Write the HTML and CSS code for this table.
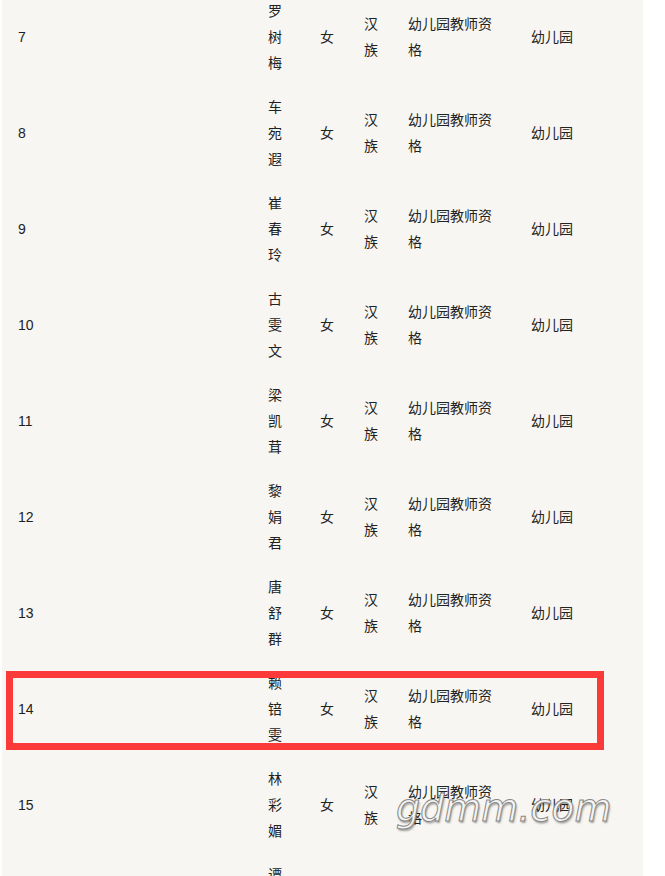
FILE: index.html
```html
<!DOCTYPE html>
<html lang="zh-CN">
<head>
 <meta charset="UTF-8">
 <meta name="viewport" content="width=device-width, initial-scale=1.0">
 <title>幼儿园教师资格名单</title>
 <link rel="stylesheet" href="styles.css">
</head>
<body>
 <div class="panel">
 <div class="list">
 <div class="row">
 <div class="cell num">7</div>
 <div class="cell name">罗树梅</div>
 <div class="cell sex">女</div>
 <div class="cell nation">汉族</div>
 <div class="cell cert">幼儿园教师资格</div>
 <div class="cell level">幼儿园</div>
 </div>
 <div class="row">
 <div class="cell num">8</div>
 <div class="cell name">车宛遐</div>
 <div class="cell sex">女</div>
 <div class="cell nation">汉族</div>
 <div class="cell cert">幼儿园教师资格</div>
 <div class="cell level">幼儿园</div>
 </div>
 <div class="row">
 <div class="cell num">9</div>
 <div class="cell name">崔春玲</div>
 <div class="cell sex">女</div>
 <div class="cell nation">汉族</div>
 <div class="cell cert">幼儿园教师资格</div>
 <div class="cell level">幼儿园</div>
 </div>
 <div class="row">
 <div class="cell num">10</div>
 <div class="cell name">古雯文</div>
 <div class="cell sex">女</div>
 <div class="cell nation">汉族</div>
 <div class="cell cert">幼儿园教师资格</div>
 <div class="cell level">幼儿园</div>
 </div>
 <div class="row">
 <div class="cell num">11</div>
 <div class="cell name">梁凯茸</div>
 <div class="cell sex">女</div>
 <div class="cell nation">汉族</div>
 <div class="cell cert">幼儿园教师资格</div>
 <div class="cell level">幼儿园</div>
 </div>
 <div class="row">
 <div class="cell num">12</div>
 <div class="cell name">黎娟君</div>
 <div class="cell sex">女</div>
 <div class="cell nation">汉族</div>
 <div class="cell cert">幼儿园教师资格</div>
 <div class="cell level">幼儿园</div>
 </div>
 <div class="row">
 <div class="cell num">13</div>
 <div class="cell name">唐舒群</div>
 <div class="cell sex">女</div>
 <div class="cell nation">汉族</div>
 <div class="cell cert">幼儿园教师资格</div>
 <div class="cell level">幼儿园</div>
 </div>
 <div class="row marked">
 <div class="cell num">14</div>
 <div class="cell name">赖锫雯</div>
 <div class="cell sex">女</div>
 <div class="cell nation">汉族</div>
 <div class="cell cert">幼儿园教师资格</div>
 <div class="cell level">幼儿园</div>
 </div>
 <div class="row">
 <div class="cell num">15</div>
 <div class="cell name">林彩媚</div>
 <div class="cell sex">女</div>
 <div class="cell nation">汉族</div>
 <div class="cell cert">幼儿园教师资格</div>
 <div class="cell level">幼儿园</div>
 </div>
 <div class="row">
 <div class="cell num">16</div>
 <div class="cell name">谭丽华</div>
 <div class="cell sex">女</div>
 <div class="cell nation">汉族</div>
 <div class="cell cert">幼儿园教师资格</div>
 <div class="cell level">幼儿园</div>
 </div>
 </div>
 </div>
 <div class="watermark">gdmm.com</div>
</body>
</html>
```

FILE: styles.css
```css
html, body {
    margin: 0;
    padding: 0;
    background-color: #ffffff;
    overflow: hidden;
 }

.panel {
    width: 641px;
    margin-left: 2px;
    min-height: 900px;
    background-color: #f7f6f2;
    font-family: "Liberation Sans", "Noto Sans CJK SC", sans-serif;
    font-size: 14px;
    line-height: 26px;
    color: #222;
 }

.list {
    margin-top: -11px;
    padding-left: 1px;
 }

.row {
    position: relative;
    display: grid;
    grid-template-columns: 250px 52px 44px 44px 123px 1fr;
    align-items: center;
    padding: 9px 0;
 }

.cell {
    padding: 0 15px;
 }

.marked::after {
    content: "";
    position: absolute;
    top: 10px;
    left: 3px;
    width: 598px;
    height: 79px;
    border: 7px solid #fc3a3a;
    box-sizing: border-box;
 }

.watermark {
    position: absolute;
    left: 396px;
    top: 786px;
    font-family: "DejaVu Sans", sans-serif;
    font-style: italic;
    font-weight: 200;
    font-size: 38px;
    letter-spacing: 0;
    color: #f4f4f4;
    -webkit-text-stroke: 1px #8a8a8a;
    text-shadow: 1px 2px 2px rgba(0, 0, 0, 0.35);
 }
```
